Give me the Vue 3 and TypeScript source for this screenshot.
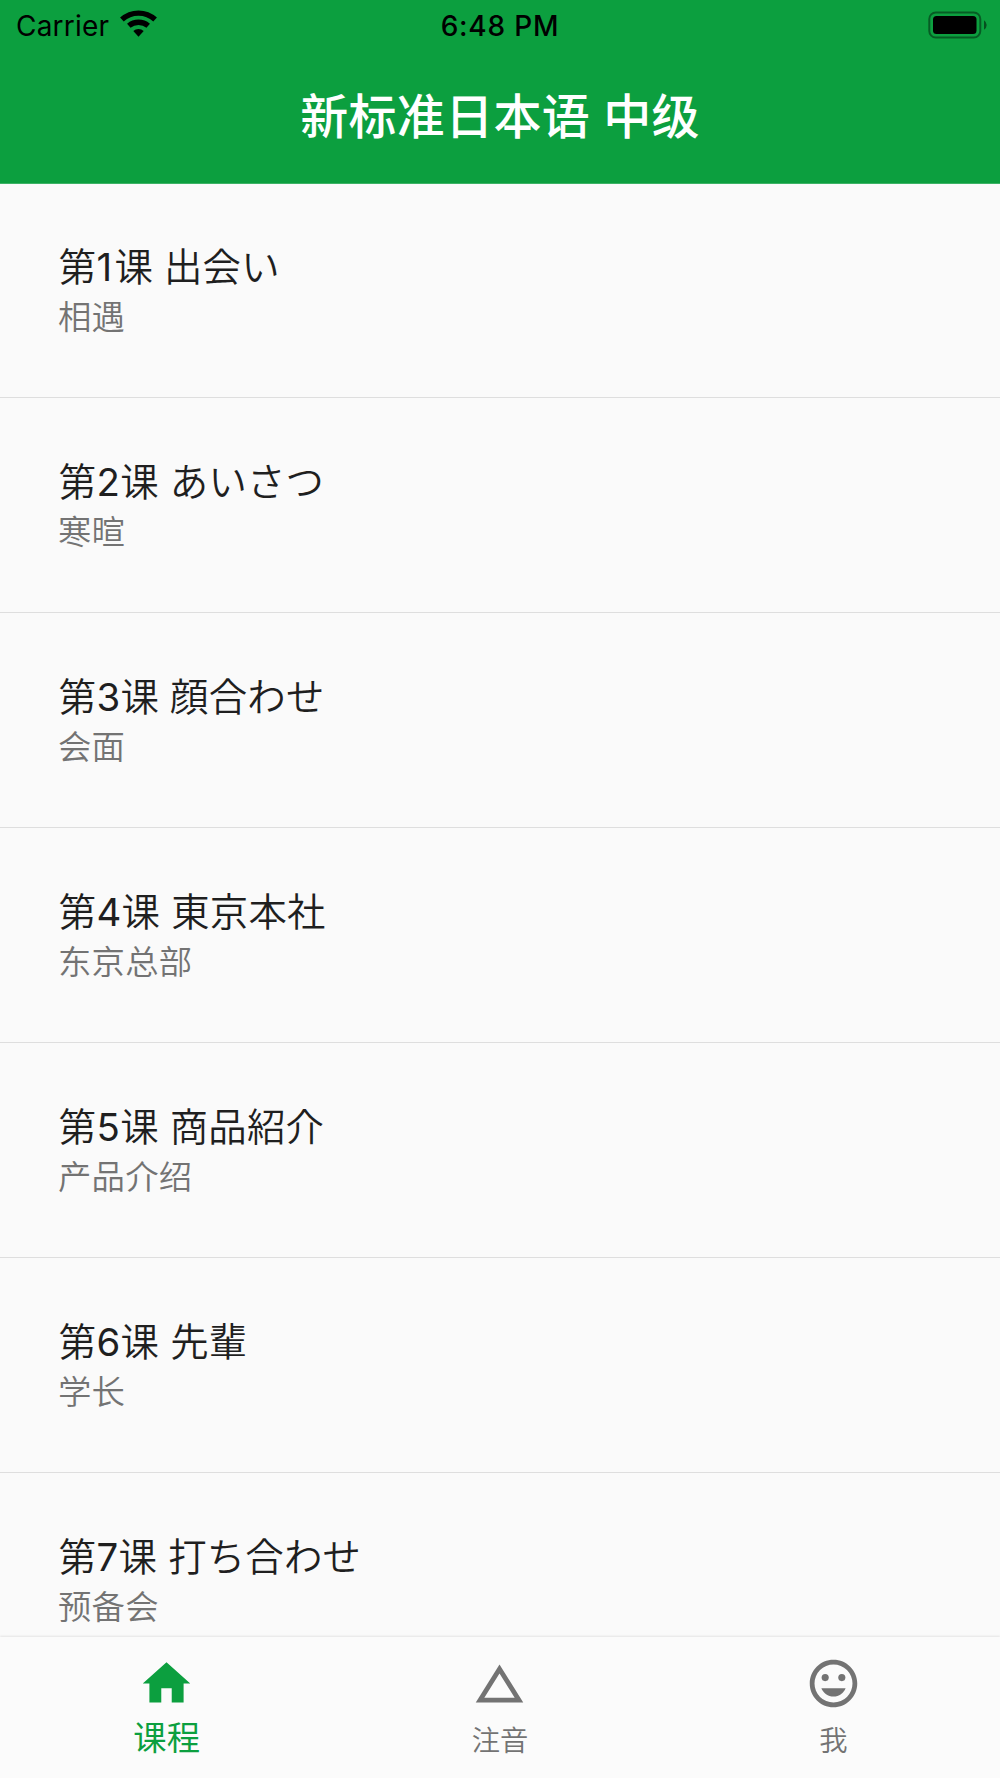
<script setup lang="ts">
interface Lesson { n: number; title: string; sub: string }
const lessons: Lesson[] = [
  { n: 1, title: '出会い', sub: '相遇' },
  { n: 2, title: 'あいさつ', sub: '寒暄' },
  { n: 3, title: '顔合わせ', sub: '会面' },
  { n: 4, title: '東京本社', sub: '东京总部' },
  { n: 5, title: '商品紹介', sub: '产品介绍' },
  { n: 6, title: '先輩', sub: '学长' },
  { n: 7, title: '打ち合わせ', sub: '预备会' },
]
</script>

<template>
  <div class="app">
    <header class="header">
      <div class="status">
        <div class="carrier">
          <span>Carrier</span>
          <svg width="37" height="28" viewBox="0 0 37 28"><g fill="none" stroke="#000" stroke-width="5.400"><path d="M1.900 9.600A24.500 24.500 0 0 1 35.100 9.600"/><path d="M8.800 15.800A15 15 0 0 1 28.200 15.800"/></g><path d="M13.300 20.900A7.800 7.800 0 0 1 23.700 20.900L18.500 26.700Z"/></svg>
        </div>
        <span class="time">6:48 PM</span>
        <svg class="battery" width="59" height="28" viewBox="0 0 59 28"><rect x="1.300" y="1.500" width="51" height="25" rx="6.500" stroke-width="2" fill="none" stroke="#000" stroke-opacity=".42"/><rect x="5" y="5" width="43.500" height="18" rx="3.500"/><path d="M56 9.200Q58.700 11 58.700 14T56 18.800Z" fill-opacity=".5"/></svg>
      </div>
      <h1>新标准日本语 中级</h1>
    </header>
    <main class="list">
      <section v-for="l in lessons" :key="l.n" class="row">
        <div class="title">第<span class="num" :class="{ narrow: l.n === 1 }">{{ l.n }}</span>课 <span class="jp">{{ l.title }}</span></div>
        <div class="sub">{{ l.sub }}</div>
      </section>
    </main>
    <nav class="tabs">
      <div class="tab active">
        <svg width="57" height="57" viewBox="0 0 24 24"><path d="M9.800 20v-6h4.400v6h5v-8H22L12 3 2 12h2.800v8z"/></svg><span>课程</span>
      </div>
      <div class="tab">
        <svg width="57" height="57" viewBox="0 0 24 24"><path d="M12 7.770L18.390 18H5.610L12 7.770M12 4L2 20h20L12 4z"/></svg><span>注音</span>
      </div>
      <div class="tab">
        <svg width="57" height="57" viewBox="0 0 24 24"><path d="M11.990 2C6.470 2 2 6.480 2 12s4.470 10 9.990 10C17.520 22 22 17.520 22 12S17.520 2 11.990 2zM12 20a8 8 0 1 1 0-16 8 8 0 0 1 0 16z"/><circle cx="8.500" cy="9.500" r="1.500"/><circle cx="15.500" cy="9.500" r="1.500"/><path d="M12 17.500c2.330 0 4.310-1.460 5.110-3.500H6.890c.8 2.040 2.780 3.500 5.110 3.500z"/></svg><span>我</span>
      </div>
    </nav>
  </div>
</template>

<style>
body { margin: 0; }
</style>
<style scoped>
.app { width: 1000px; height: 1778px; overflow: hidden; display: flex; flex-direction: column; background: #fafafa; font-family: Inter, "Noto Sans CJK SC", sans-serif; }
.header { height: 184px; flex: none; background: #0c9f3f; border-bottom: 1px solid #3cb265; box-sizing: border-box; }
.status { height: 50px; display: grid; grid-template-columns: 1fr auto 1fr; align-items: center; padding: 0 13px 0 16px; font-size: 28px; }
.carrier { display: flex; align-items: center; gap: 11px; letter-spacing: .2px; font-weight: 380; }
.carrier span { padding-top: 1px; }
.carrier svg { margin-top: -2px; }
.time { font-weight: 550; letter-spacing: .8px; padding: 1px 3px 0 0; }
.battery { justify-self: end; margin-top: -1px; }
h1 { margin: 0; color: #fff; font-size: 48px; line-height: 134px; font-weight: 500; text-align: center; letter-spacing: .3px; }
.list { flex: 1; min-height: 0; overflow: hidden; }
.row { height: 215px; box-sizing: border-box; padding: 56px 0 0 58px; border-bottom: 1px solid #dedede; white-space: nowrap; }
.row:first-child { height: 214px; padding-top: 55px; }
.title { font-size: 38.400px; line-height: 50px; color: #1f1f1f; font-weight: 350; letter-spacing: .2px; }
.num { font-weight: 380; }
.narrow { margin-right: 2px; }
.jp { font-family: "Noto Sans CJK JP", sans-serif; }
.sub { font-size: 33.400px; line-height: 51px; color: #737373; font-weight: 350; letter-spacing: .2px; }
.tabs { position: relative; height: 141px; flex: none; display: grid; grid-template-columns: repeat(3, 1fr); background: #fbfbfb; box-shadow: 0 -1px 2px rgba(0, 0, 0, .09); }
.tab { display: flex; flex-direction: column; align-items: center; padding-top: 18px; color: #737373; font-size: 28.300px; line-height: 58px; font-weight: 350; }
.tab svg { fill: currentColor; }
.active { color: #0c9f3f; font-size: 33.300px; line-height: 52px; font-weight: 400; }
</style>
